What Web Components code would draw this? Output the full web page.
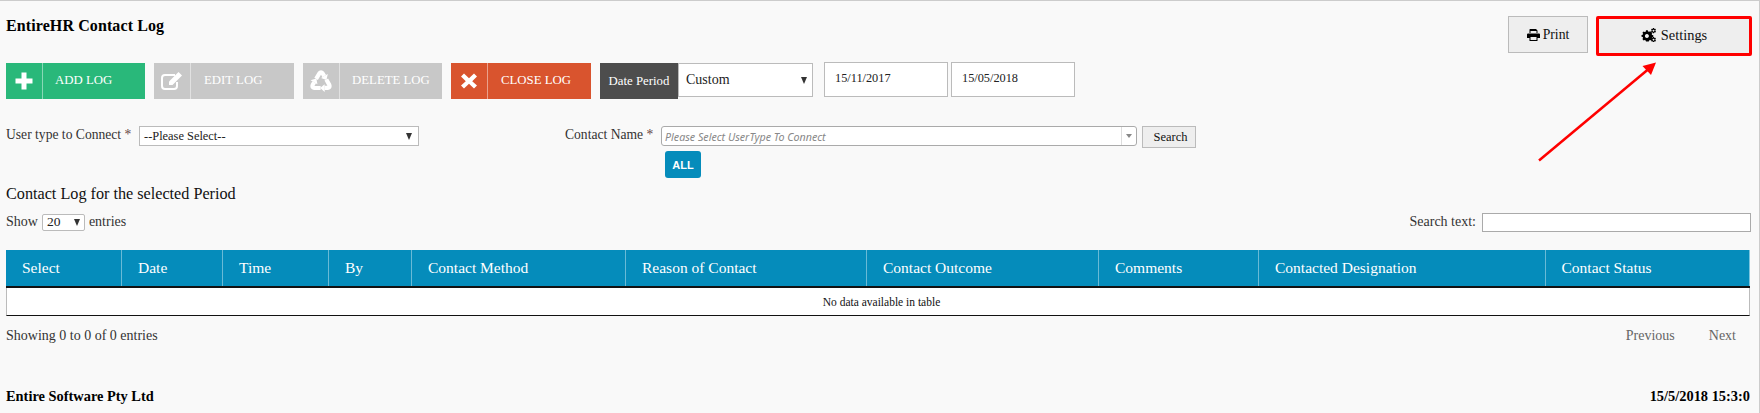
<!DOCTYPE html>
<html><head><meta charset="utf-8"><style>
html,body{margin:0;padding:0;background:#f9f9f9}
body{width:1760px;height:413px;overflow:hidden;font-family:"Liberation Serif",serif;color:#000}
</style></head><body>
<contact-log-page></contact-log-page>
<script>
const ARM='<path d="M6.500 9L9.500 4Q11 2 12.500 4L14 6.500" fill="none" stroke="#fff" stroke-width="3.800"/><path d="M16 10L17.200 4.500 11 8.200z" fill="#fff"/>';
const ICONS={
plus:'<svg width="20" height="20" viewBox="0 0 20 20"><path fill="#fff" d="M7.500 1.500h5v6h6v5h-6v6h-5v-6h-6v-5h6z"/></svg>',
edit:'<svg width="24" height="20" viewBox="0 0 24 20"><path fill="none" stroke="#fff" stroke-width="2" d="M15 4H5Q2 4 2 7v8q0 3 3 3h9q3 0 3-3v-4"/><path fill="#fff" d="M9 14v-3.500L18.500 1l3.500 3.500L12.500 14z"/></svg>',
recycle:'<svg width="24" height="24" viewBox="0 0 22 22"><g>'+ARM+'<g transform="rotate(120 11 12)">'+ARM+'</g><g transform="rotate(240 11 12)">'+ARM+'</g></g></svg>',
times:'<svg width="18" height="18" viewBox="0 0 18 18"><path fill="#fff" d="M4 1.500L9 6.200l5-4.700 3 3-4.800 4.700L17 13.500l-3 3-5-4.700-5 4.700-3-3 4.800-4.300L1 4.500z"/></svg>',
print:'<svg width="13" height="12" viewBox="0 0 13 12"><path fill="#000" d="M3 0h6l1.500 1.500V4H9.500V2H3.500v2h-1V.5zM1 4.500h11q1 0 1 1V9h-2.500v3h-8V9H0V5.500q0-1 1-1zM3.500 8v3h6V8z"/></svg>',
cogs:'<svg width="16" height="14" viewBox="0 0 16 14"><path fill="#000" fill-rule="evenodd" d="M5 2.200h1.800l.3 1.200 1 .4 1.100-.6L11.400 5l-.7 1 .4 1 1.200.3v1.800l-1.200.3-.4 1 .7 1-1.200 1.200-1.100-.6-1 .4-.3 1.200H5l-.3-1.200-1-.4-1.100.6L1.400 11l.7-1-.4-1L.5 8.700V7l1.200-.3.4-1-.7-1 1.200-1.200 1.100.6 1-.4zM5.900 6a2 2 0 1 0 .01 0z"/><path fill="#000" fill-rule="evenodd" d="M13 0l.5 1 1-.2.400 1.100-.8.700.8.700-.400 1.100-1-.2-.5 1h-1l-.5-1-1 .2L10.100 3.300l.8-.7-.8-.7.400-1.100 1 .2.500-1zM12.500 1.700a.9.900 0 1 0 .01 0zM13 9l.5 1 1-.2.400 1.100-.8.700.8.700-.400 1.100-1-.2-.5 1h-1l-.5-1-1 .2-.4-1.100.8-.7-.8-.7.400-1.100 1 .2.500-1zM12.500 10.700a.9.900 0 1 0 .01 0z"/></svg>'
};
function def(name,html,setup){
  const t=document.createElement('template');t.innerHTML=html;
  customElements.define(name,class extends HTMLElement{
    connectedCallback(){
      if(this.shadowRoot)return;
      const s=this.attachShadow({mode:'open'});
      s.appendChild(t.content.cloneNode(true));
      if(setup)setup(s,this);
    }
  });
}
def('log-button',`<style>
:host{display:flex;width:140px;height:36px;background:var(--bg,#29b87a);color:#fff;font-size:12.800px;box-sizing:border-box}
.i{width:36px;display:flex;align-items:center;justify-content:center;border-right:1px solid rgba(255,255,255,.45);flex:none}
.t{padding-left:var(--pl,12px);display:flex;align-items:center;white-space:nowrap;padding-bottom:1px}
</style><span class="i"></span><span class="t"><slot></slot></span>`,(s,h)=>{s.querySelector('.i').innerHTML=ICONS[h.getAttribute('icon')]});
def('fake-select',`<style>
:host{display:flex;box-sizing:border-box;align-items:center;justify-content:space-between;background:#fff;border:1px solid #bbb;font-size:var(--fs,12.400px);padding:0 var(--pr,6px) 0 var(--pl,4px);color:#222;height:var(--h,20px);width:var(--w,100px)}
.a{width:0;height:0;border-left:3.500px solid transparent;border-right:3.500px solid transparent;border-top:7px solid #333}
</style><span><slot></slot></span><span class="a"></span>`);
def('date-input',`<style>
:host{display:flex;box-sizing:border-box;align-items:center;width:124px;height:35px;background:#fff;border:1px solid #bbb;font-size:12.300px;padding:0 0 2px 10px;color:#222}
</style><slot></slot>`);
def('action-button',`<style>
:host{display:flex;box-sizing:border-box;align-items:center;justify-content:center;gap:var(--g,3px);background:#eee;border:1px solid #bbb;font-size:var(--fs,12.500px);color:#111;height:var(--h,37px);width:var(--w,80px);padding-bottom:var(--pb,0)}
:host([marked]){border:3px solid #f00;border-radius:2px}
</style><span id="i" style="display:flex"></span><slot></slot>`,(s,h)=>{const n=h.getAttribute('icon');if(n)s.getElementById('i').innerHTML=ICONS[n]});
def('combo-box',`<style>
:host{display:flex;box-sizing:border-box;width:476px;height:20px;background:#fff;border:1px solid #aaa;border-radius:3px;font:italic 10.700px "Noto Sans","Open Sans",sans-serif;color:#888;align-items:center;justify-content:space-between;padding-left:3px}
.t{padding-top:1px}
.b{width:14px;height:100%;border-left:1px solid #ddd;display:flex;align-items:center;justify-content:center}
.a{width:0;height:0;border-left:3.500px solid transparent;border-right:3.500px solid transparent;border-top:4px solid #888}
</style><span class="t"><slot></slot></span><span class="b"><span class="a"></span></span>`);
def('data-table',`<style>
:host{display:block;width:1744px}
.h{display:grid;grid-template-columns:116px 101px 106px 83px 214px 241px 232px 160px 286.500px 1fr;height:36px;background:#058cbb;color:#fff;font-size:15.500px;border-bottom:2px solid #111}
.h span{display:flex;align-items:center;padding-left:16px;border-right:1px solid rgba(255,255,255,.4);box-sizing:border-box;white-space:nowrap}
.h span:last-child{border-right:1px solid #7cc4de}
.b{display:flex;align-items:center;justify-content:center;height:27px;background:#fff;border:solid #bbb;border-width:0 1px;border-bottom:1px solid #111;box-sizing:content-box;font-size:11.500px;color:#111;padding-left:7px}
</style><div class="h"><span>Select</span><span>Date</span><span>Time</span><span>By</span><span>Contact Method</span><span>Reason of Contact</span><span>Contact Outcome</span><span>Comments</span><span>Contacted Designation</span><span>Contact Status</span></div><div class="b">No data available in table</div>`);
def('contact-log-page',`<style>
:host{display:block;box-sizing:border-box;width:1760px;height:413px;border-top:1px solid #ccc;border-right:1px solid #ccc;position:relative;padding:0 9px 0 6px;background:#f9f9f9;font-size:14px;color:#333}
.top{display:flex;justify-content:space-between;align-items:flex-start;height:62px}
h1{margin:17px 0 0;font-size:16px;line-height:16px;color:#000;font-weight:bold;letter-spacing:.1px}
.right{display:flex;gap:8px;margin:15px -2px 0 0}
.tools{display:flex;align-items:flex-start;height:36px}
.gap9{margin-right:9px}
.dp{width:78px;height:36px;background:#4d4d4d;color:#fff;display:flex;align-items:center;justify-content:center;font-size:12.800px}
.row2{display:flex;align-items:flex-start;margin-top:27px;height:25px}
.lbl{font-size:13.600px;line-height:16px;padding-top:1px}
.lbl i{font-style:normal;color:#644}
.all{margin-left:659px;height:27px;width:36px;background:#058cbb;border-radius:3px;color:#fff;font:bold 11px 'Liberation Sans',sans-serif;display:flex;align-items:center;justify-content:center}
.cap{margin-top:7px;font-size:16.200px;line-height:18px;color:#111}
.ctl{display:flex;justify-content:space-between;align-items:center;margin-top:9px;height:20px}
.ctl>div{display:flex;align-items:center;gap:4px}
.search{width:269px;height:19px;box-sizing:border-box;background:#fff;border:1px solid #aaa;margin:0 -1px 0 2px}
.info{display:flex;justify-content:space-between;align-items:center;margin-top:10px;height:20px}
.pager{display:flex;gap:34px;color:#666;padding-right:14px}
.foot{display:flex;justify-content:space-between;align-items:center;margin-top:42px;font-weight:bold;color:#000;font-size:14.400px;line-height:16px}
.arrow{position:absolute;left:1530px;top:50px}
</style>
<div class="top"><h1>EntireHR Contact Log</h1><div class="right"><action-button icon="print" style="--fs:13.700px">Print</action-button><action-button icon="cogs" marked style="--w:156px;--h:40px;--fs:14.400px;--g:4px;--pb:2px">Settings</action-button></div></div>
<div class="tools">
<log-button icon="plus" class="gap9" style="width:139px">ADD LOG</log-button>
<log-button icon="edit" class="gap9" style="--bg:#c8c8c8;--pl:13px">EDIT LOG</log-button>
<log-button icon="recycle" class="gap9" style="--bg:#c8c8c8;width:139px">DELETE LOG</log-button>
<log-button icon="times" class="gap9" style="--bg:#d9542e;--pl:13px">CLOSE LOG</log-button>
<div class="dp">Date Period</div>
<fake-select style="--w:135px;--h:34px;--fs:14px;--pl:7px;--pr:5px">Custom</fake-select>
<date-input style="margin-left:11px;margin-top:-1px">15/11/2017</date-input>
<date-input style="margin-left:3px;margin-top:-1px">15/05/2018</date-input>
</div>
<div class="row2">
<span class="lbl" style="width:133px">User type to Connect <i>*</i></span>
<fake-select style="--w:280px">--Please Select--</fake-select>
<span class="lbl" style="margin-left:146px;width:96px">Contact Name <i>*</i></span>
<combo-box>Please Select UserType To Connect</combo-box>
<action-button style="--w:54px;--h:22px;margin-left:5px">Search</action-button>
</div>
<div class="all">ALL</div>
<div class="cap">Contact Log for the selected Period</div>
<div class="ctl">
<div>Show <fake-select style="--w:43px;--h:17px;--pr:4px;--fs:13.500px;border-radius:2px">20</fake-select> entries</div>
<div>Search text: <div class="search"></div></div>
</div>
<data-table style="margin-top:18px"></data-table>
<div class="info"><span>Showing 0 to 0 of 0 entries</span><span class="pager"><span>Previous</span><span>Next</span></span></div>
<div class="foot"><span>Entire Software Pty Ltd</span><span>15/5/2018 15:3:0</span></div>
<svg class="arrow" width="135" height="115" viewBox="1530 50 135 115"><path d="M1539 159.500L1648 68.500" stroke="#f00" stroke-width="2.500" fill="none"/><path d="M1656 61.500L1651 74 1642.500 65z" fill="#f00"/></svg>
`);
</script></body></html>
